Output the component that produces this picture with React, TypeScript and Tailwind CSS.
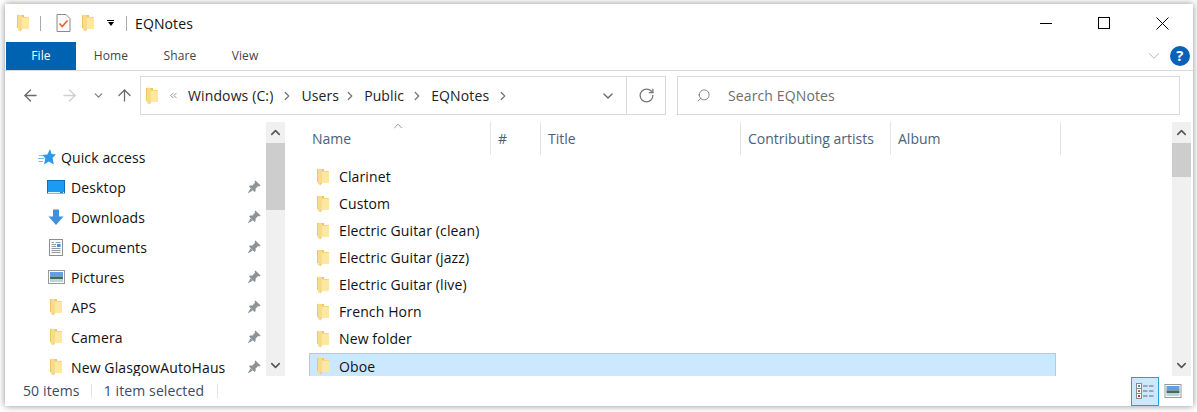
import React from 'react';
import { ArrowLeft, ArrowRight, ArrowUp, ChevronDown, ChevronRight, ChevronUp, ChevronsLeft, RotateCw, Search } from 'lucide-react';

const Folder: React.FC<{ className?: string }> = ({ className }) => (
  <svg viewBox="0 0 12 18" width="12" height="18" className={className}>
    <path d="M0 1 L7 1 L7 3 L12 3 L12 15 L3 15 L0 14 Z" fill="#f0c75f" />
    <path d="M5 3.5 L12 3.5 L12 15 L5 15 Z" fill="#fde7a3" />
    <path d="M1 0.5 L5 1.5 L5 15 L3.5 15 L3.5 17.5 L1 16 Z" fill="#f8dc8e" />
    <path d="M3.5 15 L3.5 17.5 L5 15 Z" fill="#e8bb50" />
  </svg>
);

const Pin: React.FC = () => (
  <svg viewBox="0 0 14 14" width="14" height="14">
    <path d="M8.4 0.4 L13.6 5.6 L12.4 6.4 L11.2 6 L8.6 8.6 L8.6 11 L7.6 12 L2 6.4 L3 5.4 L5.4 5.4 L8 2.8 L7.6 1.6 Z" fill="#8b9399" />
    <path d="M3.6 8.2 L5.8 10.4 L0.6 13.4 Z" fill="#8b9399" />
  </svg>
);

const QuickStar: React.FC = () => (
  <svg viewBox="0 0 18 16" width="18" height="16">
    <path d="M12 0 L13.6 5 L18 5.4 L14.6 8.8 L15.8 15.5 L10.8 12.4 L6 15.5 L7.4 9.4 L4.4 6 L9.4 5.4 Z" fill="#2b98e8" />
    <path d="M1 6.5 H5 M0 9.5 H6 M0.5 12.5 H5" stroke="#74c0f2" strokeWidth="1" />
  </svg>
);

const DesktopIcon: React.FC = () => (
  <svg viewBox="0 0 18 14" width="18" height="14">
    <rect x="0.5" y="0.5" width="17" height="12.5" fill="#1b9cf0" stroke="#0f6fb5" />
    <path d="M1 12.5 H17" stroke="#dff2fd" strokeWidth="1" strokeDasharray="12 3 2" />
  </svg>
);

const DownloadIcon: React.FC = () => (
  <svg viewBox="0 0 16 17" width="16" height="17">
    <path d="M5 0.5 H11 V7.5 H15.5 L8 16 L0.5 7.5 H5 Z" fill="#3f8fdd" />
  </svg>
);

const DocumentIcon: React.FC = () => (
  <svg viewBox="0 0 14 17" width="14" height="17">
    <rect x="0.5" y="0.5" width="13" height="16" fill="#fbfbfb" stroke="#8f8f8f" />
    <path d="M2.5 3.5 H5 M6.5 3.5 H11.5 M2.5 5.5 H7 M2.5 7.5 H7 M2.5 9.5 H11.5 M2.5 11.5 H11.5 M2.5 13.5 H11.5" stroke="#8f9aa5" strokeWidth="1" />
    <rect x="8" y="5" width="3.5" height="3" fill="#3f8fdd" />
  </svg>
);

const PictureIcon: React.FC<{ w?: number; h?: number }> = ({ w = 17, h = 14 }) => (
  <svg viewBox="0 0 17 14" width={w} height={h}>
    <rect x="0.5" y="0.5" width="16" height="13" fill="#fff" stroke="#999" />
    <rect x="2" y="2" width="13" height="4.5" fill="#5f9fe8" />
    <rect x="2" y="6.5" width="13" height="2.5" fill="#4a6a58" />
    <rect x="2" y="9" width="13" height="3" fill="#b8d4dc" />
  </svg>
);

const ChecklistIcon: React.FC = () => (
  <svg viewBox="0 0 15 18" width="15" height="18">
    <path d="M1 0.5 H10 L14 4.5 V17.5 H1 Z" fill="#fafafa" stroke="#8a8a8a" />
    <path d="M3.5 9.5 L6.2 12.5 L11.5 6.5" fill="none" stroke="#e8622c" strokeWidth="1.6" />
  </svg>
);

const DetailsIcon: React.FC = () => (
  <svg viewBox="0 0 18 16" width="18" height="16">
    <rect x="0.5" y="0.5" width="5" height="15" fill="#fff" stroke="#8a8a8a" />
    <path d="M0.5 5.5 H5.5 M0.5 10.5 H5.5" stroke="#8a8a8a" />
    <rect x="2" y="2" width="2" height="2" fill="#5b8aa8" />
    <rect x="2" y="7" width="2" height="2" fill="#8a7a3a" />
    <rect x="2" y="12" width="2" height="2" fill="#c0392b" />
    <path d="M7 3 H11.5 M13 3 H17.5 M7 8 H11.5 M13 8 H17.5 M7 13 H11.5 M13 13 H17.5" stroke="#666" />
  </svg>
);

const CloseGlyph: React.FC = () => (
  <svg viewBox="0 0 13 13" width="13" height="13">
    <path d="M0.5 0.5 L12.5 12.5 M12.5 0.5 L0.5 12.5" stroke="#000" strokeWidth="1" fill="none" />
  </svg>
);

const navItems = [
  { label: 'Desktop', icon: <DesktopIcon /> },
  { label: 'Downloads', icon: <DownloadIcon /> },
  { label: 'Documents', icon: <DocumentIcon /> },
  { label: 'Pictures', icon: <PictureIcon /> },
  { label: 'APS', icon: <Folder /> },
  { label: 'Camera', icon: <Folder /> },
  { label: 'New GlasgowAutoHaus', icon: <Folder /> },
];

const columns = [
  { label: 'Name', w: 'w-[182px]', pad: 'pl-[3px]' },
  { label: '#', w: 'w-[50px]', pad: 'pl-[7px]' },
  { label: 'Title', w: 'w-[200px]', pad: 'pl-[7px]' },
  { label: 'Contributing artists', w: 'w-[150px]', pad: 'pl-[7px]' },
  { label: 'Album', w: 'w-[170px]', pad: 'pl-[7px]' },
];

const files = ['Clarinet', 'Custom', 'Electric Guitar (clean)', 'Electric Guitar (jazz)', 'Electric Guitar (live)', 'French Horn', 'New folder'];

const Crumb: React.FC = () => (
  <ChevronRight size={14} strokeWidth={2.2} className="mx-[7px] text-[#777]" />
);

const Scrollbar: React.FC<{ thumb: string }> = ({ thumb }) => (
  <div className="w-[19px] shrink-0 bg-[#f0f0f0] flex flex-col">
    <div className="h-[21px] flex items-center justify-center text-[#555]">
      <ChevronUp size={15} strokeWidth={2.5} />
    </div>
    <div className={`bg-[#cdcdcd] ${thumb}`} />
    <div className="flex-1" />
    <div className="h-[21px] flex items-center justify-center text-[#555]">
      <ChevronDown size={15} strokeWidth={2.5} />
    </div>
  </div>
);

export default function App() {
  return (
    <div className="h-[412px] w-[1197px] bg-white overflow-hidden pt-[4px] pl-[5px] font-['Open_Sans',sans-serif] text-[14px] tracking-[0.12px]">
      <div className="w-[1188px] h-[402px] bg-white shadow-[0_0_7px_rgba(0,0,0,0.45)] flex flex-col">
        {/* title bar */}
        <div className="h-[38px] flex items-center shrink-0">
          <Folder className="ml-[12px]" />
          <div className="w-px h-[15px] bg-[#aaa] ml-[11px]" />
          <div className="ml-[15px]"><ChecklistIcon /></div>
          <Folder className="ml-[11px]" />
          <div className="ml-[13px] flex flex-col items-center">
            <div className="w-[7px] h-px bg-black mb-[1px]" />
            <div className="w-0 h-0 border-l-[3.5px] border-r-[3.5px] border-t-[4px] border-l-transparent border-r-transparent border-t-black" />
          </div>
          <div className="w-px h-[15px] bg-[#aaa] ml-[12px]" />
          <span className="ml-[8px] text-[#111]">EQNotes</span>
          <div className="flex-1" />
          <div className="w-[12px] h-px bg-black mr-[46px]" />
          <div className="w-[12px] h-[12px] border border-black mr-[46px]" />
          <div className="mr-[24px]"><CloseGlyph /></div>
        </div>

        {/* ribbon tabs */}
        <div className="h-[29px] flex items-stretch shrink-0 border-b border-[#dadada] text-[12px] text-[#444]">
          <div className="ml-px w-[70px] h-[28px] bg-[#0063b1] text-white flex items-center justify-center">File</div>
          <div className="w-[70px] flex items-center justify-center h-[28px]">Home</div>
          <div className="w-[68px] flex items-center justify-center h-[28px]">Share</div>
          <div className="w-[62px] flex items-center justify-center h-[28px]">View</div>
          <div className="flex-1" />
          <ChevronDown size={18} strokeWidth={1} className="self-center -mt-[1px] text-[#999] mr-[7px]" />
          <div className="self-center -mt-[1px] mr-[3px] w-[20px] h-[20px] rounded-full bg-[#0a62b8] text-white text-[15px] font-bold flex items-center justify-center">?</div>
        </div>

        {/* address row */}
        <div className="h-[51px] shrink-0 flex items-start pt-[5px]">
          <div className="h-[39px] flex items-center">
            <ArrowLeft size={19} strokeWidth={1.6} className="ml-[16px] text-[#6a6a6a]" />
            <ArrowRight size={19} strokeWidth={1.6} className="ml-[20px] text-[#cfcfcf]" />
            <ChevronDown size={13} strokeWidth={2} className="ml-[13px] text-[#777]" />
            <ArrowUp size={19} strokeWidth={1.6} className="ml-[10px] text-[#6a6a6a]" />
          </div>
          <div className="ml-[6px] w-[526px] h-[39px] border border-[#d9d9d9] flex items-center">
            <Folder className="ml-[5px]" />
            <ChevronsLeft size={11} strokeWidth={1.5} className="ml-[10px] text-[#666]" />
            <span className="ml-[9px] text-[#222]">Windows (C:)</span>
            <Crumb />
            <span className="-mr-[3px] text-[#222]">Users</span>
            <Crumb />
            <span className="-mr-[1px] text-[#222]">Public</span>
            <Crumb />
            <span className="text-[#222]">EQNotes</span>
            <Crumb />
            <div className="flex-1" />
            <ChevronDown size={16} strokeWidth={2} className="mr-[10px] text-[#666]" />
            <div className="w-[39px] h-full border-l border-[#d9d9d9] flex items-center justify-center">
              <RotateCw size={17} strokeWidth={1.8} className="text-[#777]" />
            </div>
          </div>
          <div className="ml-[11px] w-[503px] h-[39px] border border-[#d9d9d9] flex items-center">
            <Search size={15} strokeWidth={1.2} className="ml-[18px] text-[#666] -scale-x-100" />
            <span className="ml-[17px] text-[#6d6d6d]">Search EQNotes</span>
          </div>
        </div>

        {/* main area */}
        <div className="flex-1 min-h-0 flex overflow-hidden">
          <div className="w-[261px] shrink-0 pt-[20px] overflow-hidden">
            <div className="h-[30px] flex items-center pl-[33px]">
              <QuickStar />
              <span className="ml-[5px] text-[#111]">Quick access</span>
            </div>
            {navItems.map((item) => (
              <div key={item.label} className="h-[30px] flex items-center">
                <div className="ml-[42px] w-[18px] mr-[6px] flex items-center justify-center">{item.icon}</div>
                <span className="text-[#111] whitespace-nowrap">{item.label}</span>
                <div className="flex-1" />
                <div className="mr-[5px]"><Pin /></div>
              </div>
            ))}
          </div>
          <Scrollbar thumb="h-[67px]" />

          <div className="flex-1 min-w-0 relative">
            <div className="absolute left-[106px] top-[-3px] text-[#666]">
              <ChevronUp size={14} strokeWidth={1.2} />
            </div>
            <div className="flex h-[33px] pl-[24px] tracking-normal">
              {columns.map((c) => (
                <div key={c.label} className={`${c.w} ${c.pad} shrink-0 border-r border-[#e5e5e5] flex items-center text-[#4c607a]`}>
                  {c.label}
                </div>
              ))}
            </div>
            <div className="pt-[8px] pl-[24px]">
              {files.map((name) => (
                <div key={name} className="h-[27px] flex items-center pl-[8px] text-[#111]">
                  <Folder />
                  <span className="ml-[10px]">{name}</span>
                </div>
              ))}
              <div className="w-[747px] h-[25px] mt-px bg-[#cce8ff] border border-[#99d1ff] flex items-center pl-[7px] text-[#111]">
                <Folder />
                <span className="ml-[10px] mt-[1px]">Oboe</span>
              </div>
            </div>
          </div>
          <Scrollbar thumb="h-[34px]" />
          <div className="w-[2px]" />
        </div>

        {/* status bar */}
        <div className="h-[30px] shrink-0 flex items-center text-[#3a4a66]">
          <span className="ml-[18px] -mt-[1px]">50 items</span>
          <div className="w-px h-[14px] bg-[#e5e5e5] ml-[11px]" />
          <span className="ml-[12px] -mt-[1px]">1 item selected</span>
          <div className="w-px h-[14px] bg-[#e5e5e5] ml-[13px]" />
          <div className="flex-1" />
          <div className="w-[28px] h-[29px] bg-[#cce8ff] border border-[#26a0da] flex items-center justify-center">
            <DetailsIcon />
          </div>
          <div className="ml-[5px] mr-[11px]"><PictureIcon w={18} h={14} /></div>
        </div>
      </div>
    </div>
  );
}
